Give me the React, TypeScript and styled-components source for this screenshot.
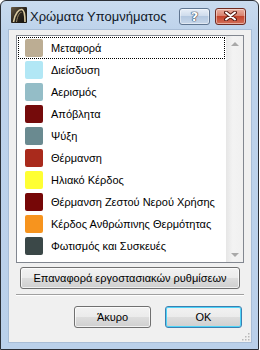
import { createGlobalStyle, styled } from "styled-components";

type Legend = {
  name: string;
  color: string;
};

const legends: Legend[] = [
  { name: "Μεταφορά", color: "#bcad93" },
  { name: "Διείσδυση", color: "#b2e7f5" },
  { name: "Αερισμός", color: "#94bdc7" },
  { name: "Απόβλητα", color: "#750b0b" },
  { name: "Ψύξη", color: "#6a8a90" },
  { name: "Θέρμανση", color: "#a92a1c" },
  { name: "Ηλιακό Κέρδος", color: "#ffff33" },
  { name: "Θέρμανση Ζεστού Νερού Χρήσης", color: "#760707" },
  { name: "Κέρδος Ανθρώπινης Θερμότητας", color: "#f7941e" },
  { name: "Φωτισμός και Συσκευές", color: "#3b4848" },
];

const GlobalStyle = createGlobalStyle`
  html, body {
    margin: 0;
    padding: 0;
    background: #ffffff;
  }
  body {
    font-family: "Liberation Sans", Arial, sans-serif;
  }
`;

const Window = styled.div`
  width: 259px;
  height: 350px;
  box-sizing: border-box;
  border: 1px solid #2b2f36;
  border-radius: 6px 6px 0 0;
  background: linear-gradient(#c9dbef 0px, #bed3eb 30px, #bad0ea 100%);
  padding: 0 6px 6px 7px;
  display: flex;
  flex-direction: column;
`;

const TitleBar = styled.div`
  height: 28px;
  display: flex;
  align-items: center;
  padding-left: 3px;
  gap: 3px;
`;

const Title = styled.span`
  flex: 1;
  min-width: 0;
  white-space: nowrap;
  font-size: 13px;
  color: #101828;
  padding-top: 2px;
`;

const CaptionButton = styled.div<{ $kind: "help" | "close" }>`
  width: 31px;
  height: 17px;
  flex-shrink: 0;
  box-sizing: border-box;
  border: 1px solid ${({ $kind }) => ($kind === "close" ? "#6f2b22" : "#5f7590")};
  border-radius: 3px;
  display: flex;
  align-items: center;
  justify-content: center;
  margin-top: 2px;
  margin-right: ${({ $kind }) => ($kind === "close" ? "6px" : "2px")};
  background: ${({ $kind }) =>
    $kind === "close"
      ? "linear-gradient(#ebb0a2 0%, #d8826f 45%, #c4432c 50%, #d2705a 100%)"
      : "linear-gradient(#e8eff8 0%, #cfdcec 45%, #b4c8e0 50%, #c7d7ea 100%)"};
  box-shadow: inset 0 0 0 1px rgba(255, 255, 255, 0.45);

  span {
    font-family: "DejaVu Sans", sans-serif;
    font-weight: bold;
    font-size: 13px;
    color: #ffffff;
    line-height: 1;
    text-shadow: 0 0 1px #24364f, 0 0 1px #24364f, 0 0 1px #24364f;
  }
`;

const Content = styled.div`
  flex: 1;
  background: #f0f0f0;
  border: 1px solid #a8bdd6;
  display: flex;
  flex-direction: column;
  padding: 5px 7px 0 7px;
  position: relative;
`;

const ListBox = styled.div`
  height: 228px;
  box-sizing: border-box;
  border: 1px solid #828790;
  background: #ffffff;
  display: flex;
`;

const Items = styled.div`
  flex: 1;
  min-width: 0;
  padding: 1px 1px 0 1px;
  display: flex;
  flex-direction: column;
`;

const Row = styled.div<{ $focused?: boolean }>`
  height: 22px;
  flex-shrink: 0;
  box-sizing: border-box;
  display: flex;
  align-items: center;
  gap: 8px;
  padding-left: 6px;
  border: 1px ${({ $focused }) => ($focused ? "dotted #000" : "solid transparent")};
  font-size: 11px;
  color: #000;
  white-space: nowrap;
  overflow: hidden;
`;

const Swatch = styled.div<{ $color: string }>`
  width: 18px;
  height: 18px;
  border-radius: 2px;
  background: ${({ $color }) => $color};
  flex-shrink: 0;
`;

const ScrollBar = styled.div`
  width: 17px;
  flex-shrink: 0;
  background: linear-gradient(90deg, #e6e6e6, #f3f3f3 40%, #f0f0f0);
  display: flex;
  flex-direction: column;
  justify-content: space-between;
  align-items: center;
  padding: 6px 0 5px;
`;

const Arrow = styled.div<{ $down?: boolean }>`
  width: 0;
  height: 0;
  border-left: 4px solid transparent;
  border-right: 4px solid transparent;
  ${({ $down }) =>
    $down ? "border-top: 4px solid #a9a9a9;" : "border-bottom: 4px solid #a9a9a9;"}
`;

const Button = styled.button<{ $default?: boolean }>`
  height: 22px;
  box-sizing: border-box;
  font-family: "Liberation Sans", Arial, sans-serif;
  font-size: 11px;
  color: #000;
  white-space: nowrap;
  border: 1px solid ${({ $default }) => ($default ? "#3c7fb1" : "#707070")};
  border-radius: 3px;
  background: linear-gradient(#f2f2f2 0%, #ebebeb 50%, #dddddd 51%, #cfcfcf 100%);
  box-shadow: inset 0 0 0 1px
    ${({ $default }) => ($default ? "#4ed4f8" : "rgba(255, 255, 255, 0.7)")};
  padding: 0;
`;

const ResetButton = styled(Button)`
  margin: 4px 4px 0 4px;
`;

const Separator = styled.div`
  margin-top: 5px;
  border-top: 1px solid #a0a0a0;
  border-bottom: 1px solid #ffffff;
`;

const ButtonRow = styled.div`
  display: flex;
  justify-content: flex-end;
  gap: 14px;
  margin-top: 10px;
  padding-right: 2px;

  button {
    width: 77px;
  }
`;

const Grip = styled.svg`
  position: absolute;
  right: 1px;
  bottom: 1px;
`;

const AppIcon = () => (
  <svg width="16" height="16" viewBox="0 0 16 16" style={{ flexShrink: 0 }}>
    <defs>
      <linearGradient id="ibg" x1="0" y1="0" x2="1" y2="1">
        <stop offset="0" stopColor="#6b5c45" />
        <stop offset="0.5" stopColor="#2a241c" />
        <stop offset="1" stopColor="#14110d" />
      </linearGradient>
    </defs>
    <rect x="0" y="0" width="16" height="16" rx="1" fill="url(#ibg)" />
    <path d="M2.5 15 C4 6, 8 2, 11 2.5 C13 3, 14 8, 14 15" fill="none" stroke="#d9c9a0" strokeWidth="1.6" />
    <path d="M5.5 15 C6.5 8, 9 5, 10.5 5.5" fill="none" stroke="#9c8a66" strokeWidth="1" />
  </svg>
);

const App = () => {
  return (
    <>
      <GlobalStyle />
      <Window>
        <TitleBar>
          <AppIcon />
          <Title>Χρώματα Υπομνήματος</Title>
          <CaptionButton $kind="help">
            <span>?</span>
          </CaptionButton>
          <CaptionButton $kind="close">
            <svg width="13" height="10" viewBox="0 0 13 10">
              <path d="M2 1.5 L11 8.5 M11 1.5 L2 8.5" stroke="#5a1b12" strokeWidth="4" strokeLinecap="round" />
              <path d="M2 1.5 L11 8.5 M11 1.5 L2 8.5" stroke="#ffffff" strokeWidth="2" strokeLinecap="round" />
            </svg>
          </CaptionButton>
        </TitleBar>
        <Content>
          <ListBox>
            <Items>
              {legends.map((legend, i) => (
                <Row key={legend.name} $focused={i === 0}>
                  <Swatch $color={legend.color} />
                  <span>{legend.name}</span>
                </Row>
              ))}
            </Items>
            <ScrollBar>
              <Arrow />
              <Arrow $down />
            </ScrollBar>
          </ListBox>
          <ResetButton>Επαναφορά εργοστασιακών ρυθμίσεων</ResetButton>
          <Separator />
          <ButtonRow>
            <Button>Άκυρο</Button>
            <Button $default>OK</Button>
          </ButtonRow>
          <Grip width="10" height="10" viewBox="0 0 10 10">
            {[
              [8, 2],
              [8, 5],
              [5, 5],
              [8, 8],
              [5, 8],
              [2, 8],
            ].map(([x, y]) => (
              <rect key={`${x}-${y}`} x={x} y={y} width="1.5" height="1.5" fill="#b8b8b8" />
            ))}
          </Grip>
        </Content>
      </Window>
    </>
  );
};

export default App;
